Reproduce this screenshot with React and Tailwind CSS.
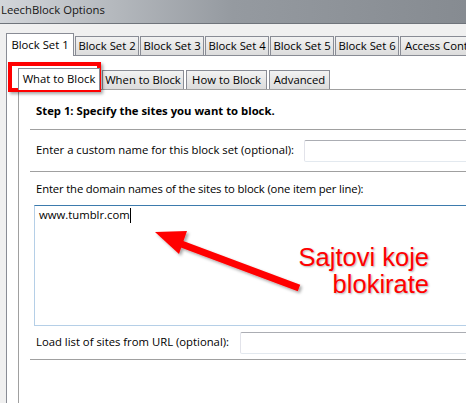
import React from 'react';

const outerTabs = ['Block Set 2', 'Block Set 3', 'Block Set 4', 'Block Set 5', 'Block Set 6', 'Access Control'];
const innerTabs = [
  { label: 'When to Block', w: 'w-[82px]' },
  { label: 'How to Block', w: 'w-[81px]' },
  { label: 'Advanced', w: 'w-[61px]' },
];

const tabIdle =
  'h-[19px] border border-b-0 border-[#898c95] bg-gradient-to-b from-[#f2f2f2] to-[#dcdcdc] flex items-center justify-center whitespace-nowrap text-black';

const App = () => {
  return (
    <div className="relative w-[466px] h-[403px] overflow-hidden bg-[#f0f0f0] font-['Open_Sans',sans-serif] text-[11.3px] text-black">
      {/* title bar */}
      <div className="h-[24px] bg-gradient-to-r from-[#d3d6da] via-[#959aa0] to-[#868b91] border-b border-[#6f747b] flex items-start">
        <span className="pl-[1px] pt-[2px] text-[11.3px] text-[#151515] whitespace-nowrap">LeechBlock Options</span>
      </div>

      <div className="pl-[6px] pt-[9px] w-[520px]">
        {/* outer tabs */}
        <div className="flex items-end h-[22px]">
          <div className="relative z-10 w-[68px] h-[23px] -mb-[1px] border border-b-0 border-[#898c95] bg-white flex items-center justify-center whitespace-nowrap pt-[1px]">
            Block Set 1
          </div>
          {outerTabs.map((t) => (
            <div key={t} className={`${tabIdle} ${t === 'Access Control' ? 'w-[80px] ml-[1px] justify-start pl-[4px]' : 'w-[64px] ml-[1px]'}`}>
              {t}
            </div>
          ))}
        </div>

        {/* outer panel */}
        <div className="border-l border-t border-[#898c95] bg-white pl-[11px] pt-[12px] h-[360px]">
          {/* inner tabs */}
          <div className="flex items-end h-[21px]">
            <div className="relative z-10 w-[82px] h-[22px] -mb-[1px] border border-b-0 border-[#898c95] bg-white flex items-center justify-center whitespace-nowrap">
              What to Block
            </div>
            {innerTabs.map((t) => (
              <div key={t.label} className={`${tabIdle} ${t.w} ml-[2px]`}>
                {t.label}
              </div>
            ))}
          </div>

          {/* inner panel */}
          <div className="border-l border-t border-[#a0a0a0] pl-[11px] h-[320px]">
            <div className="h-[39px] pt-[13px] pl-[6px] font-bold">Step 1: Specify the sites you want to block.</div>
            <div className="h-px bg-[#a0a0a0]" />
            <div className="h-[41px] flex items-center pl-[6px]">
              <span className="whitespace-nowrap">Enter a custom name for this block set (optional):</span>
              <div className="ml-[10px] flex-1 h-[22px] border border-[#abadb3] border-l-[#e2e3ea] border-b-[#e3e9ef] rounded-[2px] bg-white" />
            </div>
            <div className="h-px bg-[#a0a0a0]" />
            <div className="h-[187px] pt-[9px] flex flex-col">
              <div className="pl-[6px] whitespace-nowrap tracking-[-0.15px]">Enter the domain names of the sites to block (one item per line):</div>
              <div className="ml-[4px] mt-[7px] h-[123px] border border-[#b5cfe7] border-t-[#3d7bad] bg-white pl-[4px] pt-[1px]">
                <span className="inline-flex items-center">
                  www.tumblr.com<span className="inline-block w-px h-[15px] bg-black" />
                </span>
              </div>
              <div className="h-[33px] flex items-center pl-[6px]">
                <span className="whitespace-nowrap">Load list of sites from URL (optional):</span>
                <div className="ml-[11px] flex-1 h-[22px] border border-[#abadb3] border-l-[#e2e3ea] border-b-[#e3e9ef] rounded-[2px] bg-white" />
              </div>
            </div>
            <div className="h-px bg-[#a0a0a0]" />
          </div>
        </div>
      </div>

      {/* annotation: red highlight box */}
      <div className="absolute left-[8px] top-[62px] w-[93px] h-[30px] border-4 border-[#ff0000] shadow-[2px_2px_3px_rgba(0,0,0,0.35)]" />

      {/* annotation: arrow */}
      <svg className="absolute left-0 top-0" width="466" height="403" viewBox="0 0 466 403">
        <defs>
          <filter id="sh" x="-20%" y="-20%" width="140%" height="140%">
            <feDropShadow dx="2" dy="2" stdDeviation="1.5" floodColor="#000" floodOpacity="0.35" />
          </filter>
        </defs>
        <g filter="url(#sh)" fill="#ff0000" stroke="none">
          <line x1="176" y1="242" x2="299" y2="288" stroke="#ff0000" strokeWidth="7" />
          <polygon points="155,232 187,231 179,254" />
        </g>
      </svg>

      {/* annotation: caption */}
      <div className="absolute right-[37px] top-[244px] text-right font-['Liberation_Sans',Arial,sans-serif] text-[25.5px] leading-[27px] text-[#ff0000] [text-shadow:1px_1px_2px_rgba(0,0,0,0.3)]">
        <div>Sajtovi koje</div>
        <div>blokirate</div>
      </div>
    </div>
  );
};

export default App;
